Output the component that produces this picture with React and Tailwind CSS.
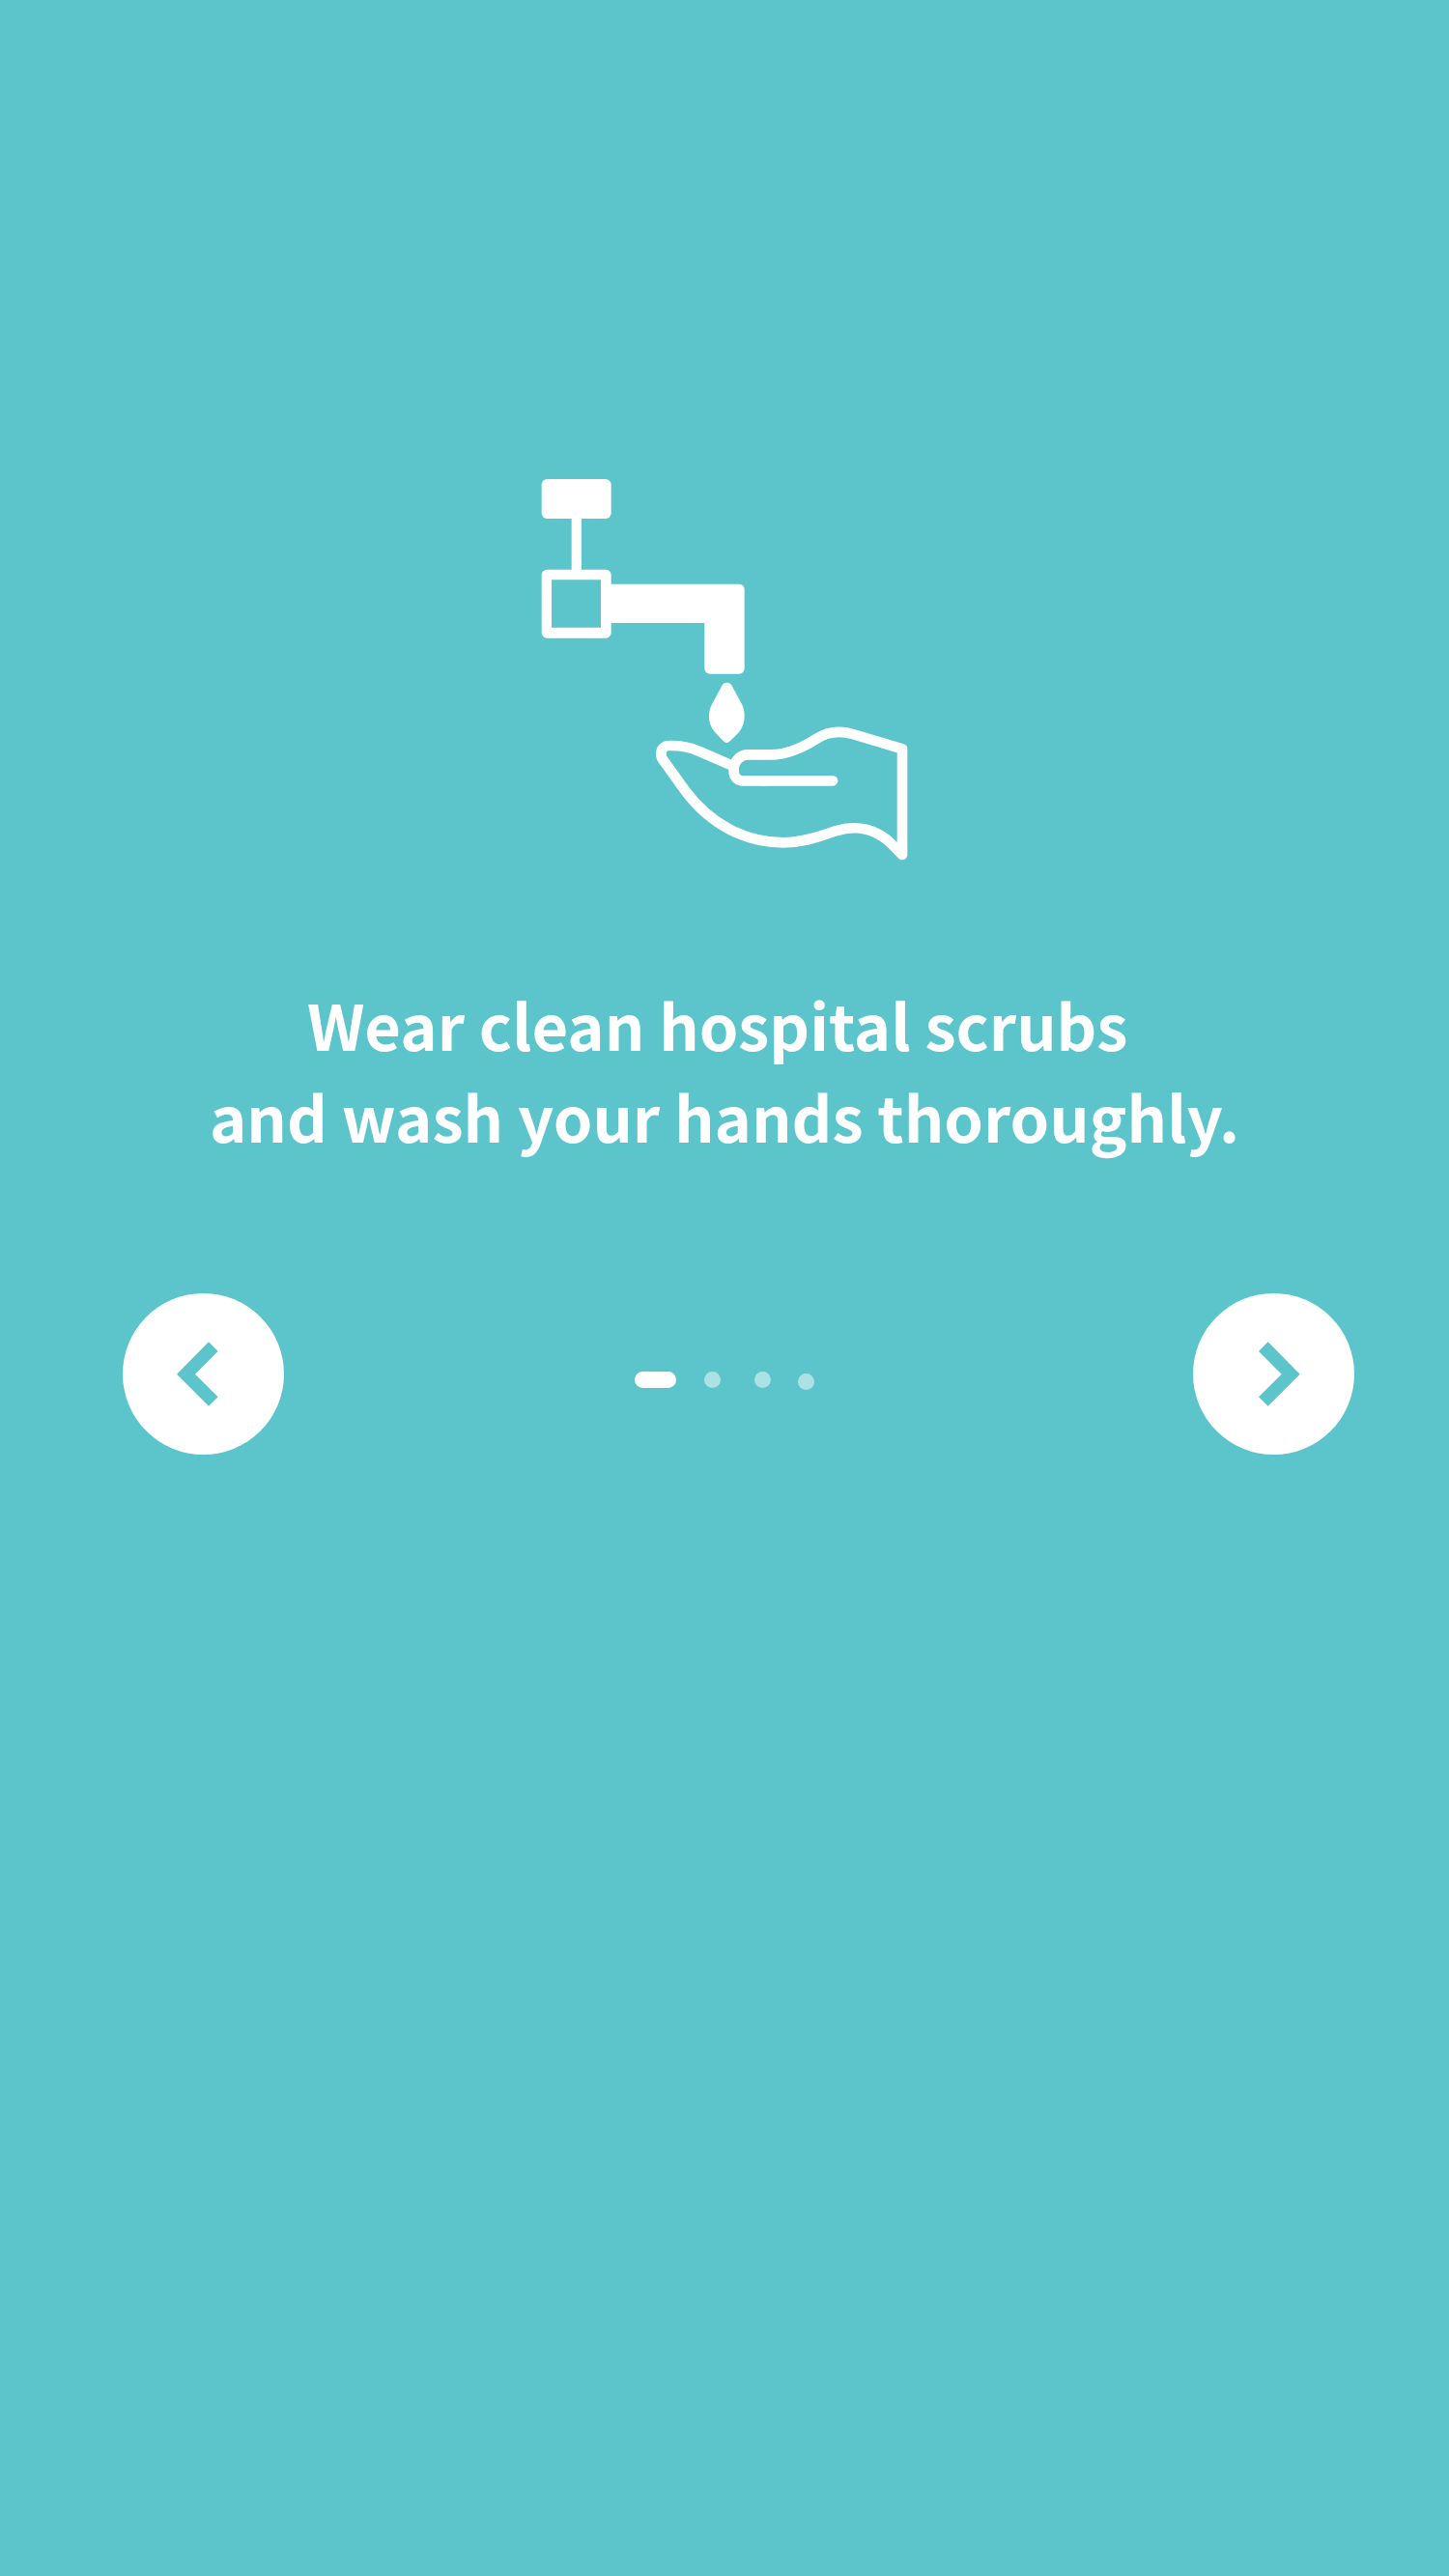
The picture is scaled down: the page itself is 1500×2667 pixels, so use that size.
import { useState } from "react";

function WashHandsIcon() {
  return (
    <svg
      viewBox="0 0 1140 1188"
      className="h-[396px] w-[380px]"
      role="img"
      aria-label="Water dripping from a tap onto an open hand"
    >
      {/* Tap */}
      <g transform="translate(-60 -45)" fill="#fff">
        <rect x="62" y="48" width="216" height="123" rx="17" />
        <rect x="155" y="160" width="31" height="180" />
        <path
          fillRule="evenodd"
          d="M79 329H261A17 17 0 0 1 278 346V374H676A16 16 0 0 1 692 390V637A16 16 0 0 1 676 653H584A16 16 0 0 1 568 637V495H278V525A17 17 0 0 1 261 542H79A17 17 0 0 1 62 525V346A17 17 0 0 1 79 329ZM93 361V509H246V361Z"
        />
      </g>
      {/* Drop and hand */}
      <g transform="translate(300 585)">
        <path
          fill="#fff"
          d="M262 60C268 47 287 47 293 60L325 119C337 146 334 181 315 204L288 231C281 239 273 239 266 231L240 204C219 180 217 146 230 119Z"
        />
        <path
          fill="none"
          stroke="#fff"
          strokeWidth="32"
          strokeLinejoin="round"
          d="M292 307L188 262C158 249 130 245 97 246C83 246 73 257 73 271C73 279 75 285 79 290L148 386C225 490 335 547 452 547C505 547 552 534 615 511C680 490 743 505 792 554L822 585V256L668 210C628 198 590 202 555 225C500 260 455 274 415 274H342C318 274 299 296 299 318V328C299 342 311 355 325 355H400"
        />
        <path
          fill="none"
          stroke="#fff"
          strokeWidth="32"
          strokeLinecap="round"
          d="M390 355H606"
        />
      </g>
    </svg>
  );
}

function ArrowButton({ label, points, className, onClick }) {
  return (
    <button
      type="button"
      aria-label={label}
      onClick={onClick}
      className={`size-[167px] cursor-pointer rounded-full bg-white ${className}`}
    >
      <svg viewBox="0 0 501 501" className="size-full" aria-hidden="true">
        <polygon points={points} fill="#5bc5cb" />
      </svg>
    </button>
  );
}

const dots = [
  { label: "Step 1", spacing: "" },
  { label: "Step 2", spacing: "ml-[29px]" },
  { label: "Step 3", spacing: "ml-[35px]" },
  { label: "Step 4", spacing: "ml-[28px] mt-1" },
];

export default function App() {
  const [step, setStep] = useState(0);
  const move = (by) => setStep((s) => Math.min(dots.length - 1, Math.max(0, s + by)));

  return (
    <main className="flex min-h-screen flex-col items-center bg-[#5bc5cb] pt-[495px] text-white">
      <WashHandsIcon />
      <h1 className="mt-[122px] text-center font-['Noto_Sans_CJK_KR','Noto_Sans',sans-serif] text-[65px] leading-[95px] font-bold">
        {"Wear clean hospital scrubs\u00a0"}
        <br />
        and wash your hands thoroughly.
      </h1>
      <nav
        aria-label="Steps"
        className="mt-[136px] grid w-full grid-cols-[1fr_auto_1fr] items-center"
      >
        <ArrowButton
          label="Previous"
          className="ml-[127px]"
          points="267,151 296,180 225,251 296,322 267,350 168,251"
          onClick={() => move(-1)}
        />
        <div className="flex items-center pt-3">
          {dots.map((dot, i) => (
            <button
              key={dot.label}
              type="button"
              aria-label={dot.label}
              aria-current={i === step ? "step" : undefined}
              onClick={() => setStep(i)}
              className={`h-[17px] cursor-pointer rounded-full ${dot.spacing} ${
                i === step ? "w-[43px] bg-white" : "w-[17px] bg-white/50"
              }`}
            />
          ))}
        </div>
        <ArrowButton
          label="Next"
          className="mr-[98px] justify-self-end"
          points="233,151 332,251 233,350 204,322 275,251 204,180"
          onClick={() => move(1)}
        />
      </nav>
    </main>
  );
}
